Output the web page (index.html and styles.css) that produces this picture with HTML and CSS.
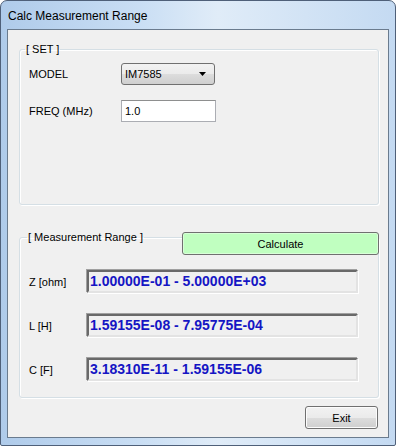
FILE: index.html
```html
<!DOCTYPE html>
<html lang="en">
<head>
    <meta charset="UTF-8">
    <title>Calc Measurement Range</title>
    <link rel="stylesheet" href="styles.css">
</head>
<body>
    <div class="window">
        <div class="titlebar">Calc Measurement Range</div>
        <div class="client">
            <fieldset class="group set-group">
                <legend>[ SET ]</legend>
                <div class="set-body">
                    <div class="row">
                        <label class="label">MODEL</label>
                        <div class="combo">
                            <span>IM7585</span>
                            <svg class="arrow" width="7" height="4" viewBox="0 0 7 4"><path d="M0 0H7L3.5 4Z" fill="#000"/></svg>
                        </div>
                    </div>
                    <div class="row">
                        <label class="label" for="freq">FREQ (MHz)</label>
                        <input class="textbox" id="freq" type="text" value="1.0">
                    </div>
                </div>
            </fieldset>

            <div class="measure">
                <fieldset class="group measure-group">
                    <legend>[ Measurement Range ]</legend>
                    <div class="result-row">
                        <span class="label short">Z [ohm]</span>
                        <div class="result">1.00000E-01 - 5.00000E+03</div>
                    </div>
                    <div class="result-row">
                        <span class="label short">L [H]</span>
                        <div class="result">1.59155E-08 - 7.95775E-04</div>
                    </div>
                    <div class="result-row">
                        <span class="label short">C [F]</span>
                        <div class="result">3.18310E-11 - 1.59155E-06</div>
                    </div>
                </fieldset>
                <button class="btn calc">Calculate</button>
            </div>

            <div class="footer">
                <button class="btn exit">Exit</button>
            </div>
        </div>
    </div>
</body>
</html>
```

FILE: styles.css
```css
html, body {
    margin: 0;
    padding: 0;
    background: #ffffff;
}
body {
    font-family: "Liberation Sans", Arial, sans-serif;
    font-size: 11px;
    color: #000;
}
.window {
    box-sizing: border-box;
    width: 396px;
    height: 446px;
    border: 1px solid #4f6079;
    border-radius: 7px 7px 2px 2px;
    padding: 0 6px 7px 6px;
    background: linear-gradient(to right, #afcbea 0%, #c9def4 35%, #e0ecf8 55%, #c4daf2 100%);
    display: flex;
    flex-direction: column;
}
.titlebar {
    height: 28px;
    display: flex;
    align-items: center;
    padding-left: 1px;
    padding-top: 1px;
    box-sizing: border-box;
    font-size: 12px;
    color: #000;
}
.client {
    flex: 1;
    background: #f0f0f0;
    border: 1px solid #6a7b8e;
    display: flex;
    flex-direction: column;
}
.group {
    border: 1px solid #d5dfe5;
    border-radius: 3px;
    box-shadow: inset 1px 1px 0 #ffffff, 1px 1px 0 #ffffff;
    margin: 0;
    padding: 0;
}
.group legend {
    font-size: 11px;
    line-height: 14px;
    padding: 0 1px;
    margin-left: -4px;
}
.measure-group legend {
    margin-left: -2px;
}
.set-group {
    margin: 12px 9px 0 11px;
    padding: 7px 9px 0 9px;
}
.set-body {
    height: 141px;
    display: flex;
    flex-direction: column;
    gap: 15px;
}
.row {
    display: flex;
    align-items: center;
    height: 22px;
}
.label {
    width: 92px;
}
.label.short {
    width: 58px;
}
.combo {
    box-sizing: border-box;
    width: 94px;
    height: 22px;
    border: 1px solid #707070;
    border-radius: 3px;
    background: linear-gradient(#f2f2f2 0%, #ebebeb 50%, #dddddd 51%, #cfcfcf 100%);
    display: flex;
    align-items: center;
    justify-content: space-between;
    padding: 0 8px 0 3px;
    color: #000;
}
.textbox {
    box-sizing: border-box;
    width: 95px;
    height: 22px;
    border: 1px solid #abadb3;
    border-top-color: #8e8f8f;
    background: #fff;
    font-family: inherit;
    font-size: 11px;
    padding: 0 3px;
    margin: 0;
    outline: none;
}
.measure {
    position: relative;
    margin: 25px 9px 0 11px;
}
.measure-group {
    padding: 26px 9px 16px 9px;
    display: flex;
    flex-direction: column;
    gap: 21px;
}
.result-row {
    display: flex;
    align-items: center;
    height: 23px;
}
.result {
    box-sizing: border-box;
    width: 271px;
    height: 23px;
    border: 2px solid;
    border-color: #696969 #e3e3e3 #e3e3e3 #696969;
    box-shadow: -1px -1px 0 #a0a0a0, 1px 1px 0 #ffffff;
    background: #f0f0f0;
    color: #1515c4;
    font-weight: bold;
    font-size: 14px;
    line-height: 19px;
    padding-left: 1px;
}
.btn {
    box-sizing: border-box;
    font-family: inherit;
    font-size: 11px;
    color: #000;
    border: 1px solid #707070;
    border-radius: 3px;
    padding: 0;
    cursor: pointer;
}
.calc {
    position: absolute;
    top: 2px;
    right: 0;
    width: 197px;
    height: 23px;
    background: #c0ffc0;
    box-shadow: inset 0 0 0 1px #d8ffd8;
}
.footer {
    display: flex;
    justify-content: flex-end;
    margin: 8px 10px 0 0;
}
.exit {
    width: 73px;
    height: 23px;
    background: linear-gradient(#f2f2f2 0%, #ebebeb 50%, #dddddd 51%, #cfcfcf 100%);
    box-shadow: inset 0 0 0 1px #fcfcfc;
}
```
